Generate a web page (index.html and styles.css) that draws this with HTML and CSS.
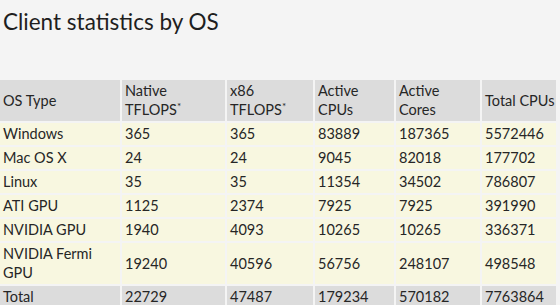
FILE: index.html
```html
<!DOCTYPE html>
<html>
<head>
<meta charset="utf-8">
<link rel="stylesheet" href="styles.css">
</head>
<body>
<h1 class="title">Client statistics by OS</h1>
<table class="stats">
  <colgroup>
    <col class="c1"><col class="c2"><col class="c3"><col class="c4"><col class="c5"><col class="c6">
  </colgroup>
  <thead>
    <tr><th>OS Type</th><th>Native TFLOPS<sup>*</sup></th><th>x86 TFLOPS<sup>*</sup></th><th>Active CPUs</th><th>Active Cores</th><th class="nowrap">Total CPUs</th></tr>
  </thead>
  <tbody>
    <tr><td>Windows</td><td>365</td><td>365</td><td>83889</td><td>187365</td><td>5572446</td></tr>
    <tr><td>Mac OS X</td><td>24</td><td>24</td><td>9045</td><td>82018</td><td>177702</td></tr>
    <tr><td>Linux</td><td>35</td><td>35</td><td>11354</td><td>34502</td><td>786807</td></tr>
    <tr><td>ATI GPU</td><td>1125</td><td>2374</td><td>7925</td><td>7925</td><td>391990</td></tr>
    <tr><td>NVIDIA GPU</td><td>1940</td><td>4093</td><td>10265</td><td>10265</td><td>336371</td></tr>
    <tr><td>NVIDIA Fermi GPU</td><td>19240</td><td>40596</td><td>56756</td><td>248107</td><td>498548</td></tr>
    <tr class="total"><td>Total</td><td>22729</td><td>47487</td><td>179234</td><td>570182</td><td>7763864</td></tr>
  </tbody>
</table>
</body>
</html>
```
FILE: styles.css
```css
html, body {
  margin: 0;
  padding: 0;
  background: #f4f4f4;
}
body {
  font-family: "Lato", "Open Sans", sans-serif;
  color: #262626;
  width: 560px;
}
.title {
  margin: 0;
  padding: 8px 0 0 3px;
  height: 70px;
  box-sizing: border-box;
  font-size: 22.5px;
  font-weight: normal;
  line-height: 28px;
  color: #1e1e1e;
}
.stats {
  border-collapse: separate;
  border-spacing: 2px;
  margin: 8px 0 0 -2px;
  font-size: 14.5px;
  line-height: 19px;
  table-layout: fixed;
  width: 560px;
}
.c1 { width: 120px; }
.c2 { width: 103px; }
.c3 { width: 86px; }
.c4 { width: 79px; }
.c5 { width: 84px; }
.c6 { width: 74px; }
.stats th, .stats td {
  text-align: left;
  font-weight: normal;
  padding: 1px 1px 2px 3px;
  vertical-align: middle;
}
.stats .nowrap {
  white-space: nowrap;
}
.stats th {
  background: #dcdcdc;
}
.stats td {
  background: #f8f7e0;
}
.stats .total td {
  background: #dcdcdc;
}
.stats sup {
  font-size: 10px;
  line-height: 0;
  vertical-align: 5px;
}
```
